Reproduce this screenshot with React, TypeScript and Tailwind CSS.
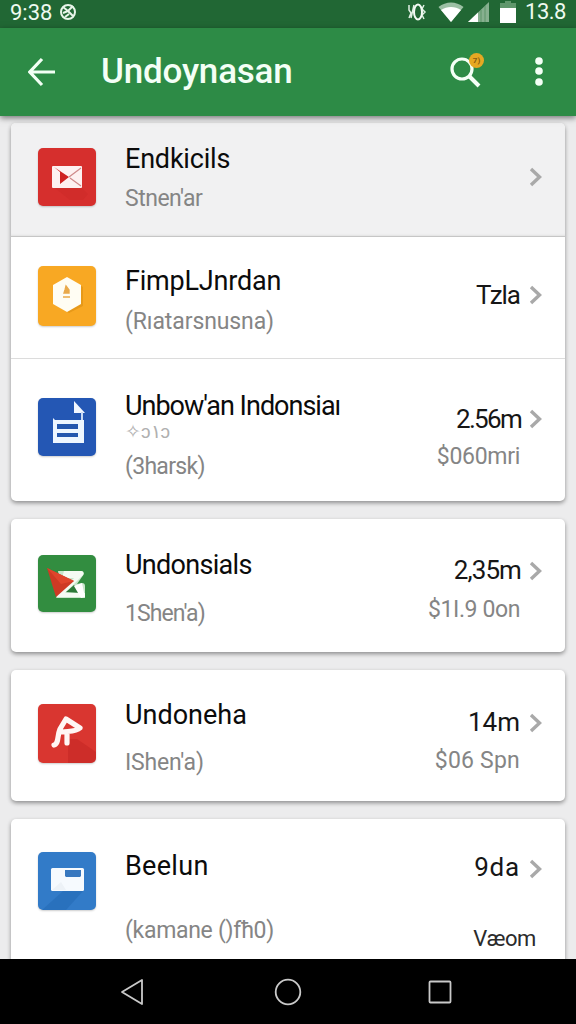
import type { ReactNode } from 'react';

type Line = { text: string; className: string };

type Item = {
    id: string;
    height: string;
    iconClass: string;
    icon: ReactNode;
    lines: Line[];
    values: Line[];
    chevron: string;
};

const title = 'h-8 text-[27px] leading-8 text-[#0b0b0b]';
const sub = 'h-7 text-[23px] leading-7 text-[#858585]';
const value = 'h-8 text-[26px] leading-8 text-[#161616]';

const MailIcon = () => (
    <svg viewBox="0 0 58 58" className="size-full">
        <path d="M17 40h27l6 6-5 6H32z" fill="#b71c1c" opacity=".15" />
        <rect x="14" y="18" width="30" height="22" rx="1" fill="#fdf1f1" />
        <path d="M16 19l15 10-9 7V24z" fill="#cf2222" />
        <path d="M43 20L31 29M32 30l11 8" stroke="#cf8a8a" strokeWidth="1.2" fill="none" />
    </svg>
);

const HexIcon = () => (
    <svg viewBox="0 0 58 60" className="size-full">
        <path d="M31 13l14 8v19l-14 7-13-8z" fill="#d98c10" opacity=".55" />
        <path d="M29 11l14 8v19l-14 8-14-8V19z" fill="#fffdf3" />
        <path d="M28 20l3 4v3h-5l1-3zM26 25h5M25 31h7" fill="#e9a94b" stroke="#e9a94b" strokeWidth="1.4" />
    </svg>
);

const DocIcon = () => (
    <svg viewBox="0 0 58 58" className="size-full">
        <path d="M36 3l11 12H36z" fill="#f2f7ff" />
        <path d="M43 14h2v9h-2z" fill="#c9daf4" />
        <path d="M15 20l2 2h29v23H15z" fill="#eef6ff" />
        <path d="M19 26h21v5H19zM19 35h21v4H19z" fill="#2457ae" />
    </svg>
);

const ArrowIcon = () => (
    <svg viewBox="0 0 58 57" className="size-full">
        <path d="M20 16h23q3 0 3 3l-7 10 5-1q3 0 3 3v12H18l5-10z" fill="#c9e6cc" />
        <path d="M26 16h17q3 0 2 4L27 38h20v4H18l18-19H24z" fill="#f4fbf3" />
        <path d="M28 37l8-7 7 8z" fill="#2c7a38" />
        <path d="M36 31l8-3 3 14-4 1z" fill="#fff" />
        <path d="M9 13l27 13-18 16z" fill="#cf3a24" />
        <path d="M9 13l27 13-13 3z" fill="#e0452c" />
    </svg>
);

const AcrobatIcon = () => (
    <svg viewBox="0 0 58 59" className="size-full">
        <path d="M30 35h9l19 13v11H30z" fill="#b71c1c" opacity=".35" />
        <path d="M16 41c5-1 3-9 6-16l6-10 14 9c-4 4-11 3-18 4M29 30v9" fill="none" stroke="#fff6f4" strokeWidth="5.2" strokeLinecap="round" strokeLinejoin="round" />
    </svg>
);

const CardIcon = () => (
    <svg viewBox="0 0 58 58" className="size-full">
        <path d="M4 58l21-19h20L28 58z" fill="#1b5ea8" opacity=".35" />
        <rect x="13" y="16" width="33" height="23" rx="1.5" fill="#f6fafe" />
        <path d="M27 18h16v6l-1 1H28l-1-1z" fill="#3878bf" />
        <path d="M14 38l9-8 5 8z" fill="#edf2f7" />
    </svg>
);

const cards: Item[][] = [
    [
        {
            id: 'endkicils',
            height: 'h-[114px] bg-[#f1f1f2] shadow-[inset_0_-1px_0_#c6c6c6,inset_0_-3px_2px_-1px_#e2e2e2]',
            iconClass: 'mt-[25px] h-[58px] bg-[#d62f2d]',
            icon: <MailIcon />,
            lines: [
                { text: 'Endkicils', className: `mt-[20px] tracking-[-0.2px] ${title}` },
                { text: 'Stnen\'ar', className: `mt-[10px] tracking-[-0.5px] ${sub}` },
            ],
            values: [],
            chevron: 'mt-[44px]',
        },
        {
            id: 'fimp',
            height: 'h-[122px] border-b border-[#dcdcdc]',
            iconClass: 'mt-[29px] h-[60px] bg-[#f8a823]',
            icon: <HexIcon />,
            lines: [
                { text: 'FimpLJnrdan', className: `mt-[28px] tracking-[-0.2px] ${title}` },
                { text: '(Rıatarsnusna)', className: `mt-[11px] tracking-[-0.1px] ${sub}` },
            ],
            values: [{ text: 'Tzla', className: `mt-[42px] tracking-[-1px] ${value}` }],
            chevron: 'mt-[48px]',
        },
        {
            id: 'unbowan',
            height: 'h-[142px]',
            iconClass: 'mt-[39px] h-[58px] bg-[#2457b4]',
            icon: <DocIcon />,
            lines: [
                { text: 'Unbow\'an Indonsiaı', className: `mt-[31px] tracking-[-1px] ${title}` },
                { text: '✧ɔ١ɔ', className: 'h-5 text-[19px] leading-5 text-[#b0b0b0]' },
                { text: '(3harsk)', className: `mt-[11px] tracking-[-0.7px] ${sub}` },
            ],
            values: [
                { text: '2.56m', className: `mt-[44px] -mr-px tracking-[-1.7px] ${value}` },
                { text: '$060mri', className: `mt-[8px] tracking-[-0.3px] ${sub}` },
            ],
            chevron: 'mt-[50px]',
        },
    ],
    [
        {
            id: 'undonsials',
            height: 'h-[133px]',
            iconClass: 'mt-[36px] h-[57px] bg-[#328d40]',
            icon: <ArrowIcon />,
            lines: [
                { text: 'Undonsials', className: `mt-[30px] tracking-[-0.7px] ${title}` },
                { text: '1Shen\'a)', className: `mt-[19px] tracking-[-0.9px] ${sub}` },
            ],
            values: [
                { text: '2,35m', className: `mt-[35px] -mr-px tracking-[-0.9px] ${value}` },
                { text: '$1I.9 0on', className: `mt-[10px] tracking-[-0.4px] ${sub}` },
            ],
            chevron: 'mt-[42px]',
        },
    ],
    [
        {
            id: 'undoneha',
            height: 'h-[131px]',
            iconClass: 'mt-[34px] h-[59px] bg-[#d93630]',
            icon: <AcrobatIcon />,
            lines: [
                { text: 'Undoneha', className: `mt-[29px] ${title}` },
                { text: 'IShen\'a)', className: `mt-[18px] tracking-[-0.2px] ${sub}` },
            ],
            values: [
                { text: '14m', className: `mt-[36px] ${value}` },
                { text: '$06 Spn', className: `mt-[9px] tracking-[0.2px] ${sub}` },
            ],
            chevron: 'mt-[43px]',
        },
    ],
    [
        {
            id: 'beelun',
            height: 'mt-px h-[160px]',
            iconClass: 'mt-[32px] h-[58px] bg-[#327bc8]',
            icon: <CardIcon />,
            lines: [
                { text: 'Beelun', className: `mt-[30px] tracking-[0.3px] ${title}` },
                { text: '(kamane ()fħ0)', className: `mt-[35px] tracking-[-0.3px] ${sub}` },
            ],
            values: [
                { text: '9da', className: `mt-[31px] tracking-[0.8px] ${value}` },
                { text: 'Væom', className: 'mt-[42px] -mr-4 h-7 text-[22px] leading-7 tracking-[-0.4px] text-[#2b2b2b]' },
            ],
            chevron: 'mt-[39px]',
        },
    ],
];

function Row({ item }: { item: Item }) {
    return (
        <div className={`flex items-start pr-[22px] pl-[27px] ${item.height}`}>
            <div className={`w-[58px] shrink-0 overflow-hidden rounded-[5px] shadow-[0_1px_2px_rgba(0,0,0,0.2)] ${item.iconClass}`}>
                {item.icon}
            </div>
            <div className="ml-[29px] flex flex-1 flex-col items-start whitespace-nowrap">
                {item.lines.map((line) => (
                    <div key={line.text} className={line.className}>{line.text}</div>
                ))}
            </div>
            <div className="mr-[9px] flex flex-col items-end whitespace-nowrap">
                {item.values.map((line) => (
                    <div key={line.text} className={line.className}>{line.text}</div>
                ))}
            </div>
            <svg viewBox="0 0 14 20" className={`h-5 w-3.5 shrink-0 ${item.chevron}`}>
                <path d="M2 2l8.500 8-8.500 8" fill="none" stroke="#a9a9a9" strokeWidth="3.400" />
            </svg>
        </div>
    );
}

function StatusBar() {
    return (
        <div className="flex h-7 shrink-0 items-center bg-[#216734] pr-[10px] pl-[10px] text-[22px] leading-7 text-[#eefaf0]">
            <span className="relative -top-px w-[43px]">9:38</span>
            <svg viewBox="0 0 16 18" className="-mt-1 ml-[7px] h-[18px] w-4">
                <circle cx="8" cy="9" r="7" fill="none" stroke="#e8f5ea" strokeWidth="2" />
                <path d="M3 4l5 4 5-5M3 10l5-2 5 5M5 14l4-3" fill="none" stroke="#e8f5ea" strokeWidth="2" />
            </svg>
            <div className="-mt-1 ml-auto flex items-center">
                <svg viewBox="0 0 20 20" className="h-5 w-5">
                    <path d="M2 3v5l2 3-2 5M7 3L4 16M17 3l-2 4 3 3-3 3 2 4" fill="none" stroke="#dff0e2" strokeWidth="1.500" />
                    <ellipse cx="11" cy="10" rx="4" ry="7.500" fill="none" stroke="#f3fbf4" strokeWidth="2" />
                </svg>
                <svg viewBox="0 0 26 20" className="ml-[11px] h-5 w-[26px]">
                    <path d="M0.500 5C8-1 18-1 25.500 5L13 20z" fill="#9cc0a4" />
                    <path d="M3 8c6-4 14-4 20 0L13 20z" fill="#fff" />
                </svg>
                <svg viewBox="0 0 22 20" className="ml-[4px] h-5 w-[22px]">
                    <path d="M21 0v20H0z" fill="#87b08f" />
                    <path d="M10 10.500V20H0z" fill="#fff" />
                    <path d="M13 8v12M17 4v16" stroke="#5c9468" strokeWidth="1" />
                </svg>
                <svg viewBox="0 0 16 22" className="ml-[10px] h-[22px] w-4">
                    <path d="M5 0h6v2h5v6H0V2h5z" fill="#5f976b" />
                    <path d="M0 7h16v15H0z" fill="#fff" />
                </svg>
                <span className="ml-[9px] tracking-[-0.5px]">13.8</span>
            </div>
        </div>
    );
}

function AppBar() {
    return (
        <header className="z-10 flex h-[88px] shrink-0 items-center bg-[#2d8b46] pr-[33px] pl-7 text-white shadow-[0_2px_6px_rgba(0,0,0,0.5)]">
            <svg viewBox="0 0 28 30" className="h-[30px] w-7">
                <path d="M27 15H2M14 2L1.800 15 14 28" fill="none" stroke="#f2fff4" strokeWidth="3.200" />
            </svg>
            <h1 className="ml-[45px] text-[35px] leading-10 font-medium tracking-[-0.2px] text-[#f4fff6]">Undoynasan</h1>
            <div className="relative ml-auto h-9 w-9">
                <svg viewBox="0 0 36 36" className="size-9">
                    <circle cx="13" cy="15" r="10" fill="none" stroke="#f4fff6" strokeWidth="3.200" />
                    <path d="M20 22l10 10" stroke="#f4fff6" strokeWidth="4" />
                </svg>
                <span className="absolute -top-[1px] left-[20px] flex h-[15px] w-[15px] items-center justify-center rounded-full bg-[#e6a823] text-[8px] font-bold text-[#875b10]">7)</span>
            </div>
            <svg viewBox="0 0 8 30" className="ml-[50px] h-[30px] w-2">
                <circle cx="4" cy="4" r="3.800" fill="#f4fff6" />
                <circle cx="4" cy="14" r="3.800" fill="#f4fff6" />
                <circle cx="4" cy="25" r="3.800" fill="#f4fff6" />
            </svg>
        </header>
    );
}

function NavBar() {
    return (
        <nav className="flex h-[65px] shrink-0 items-center bg-black pl-[120px]">
            <svg viewBox="0 0 24 28" className="h-7 w-6">
                <path d="M22 2v24L2 14z" fill="none" stroke="#c9c9c9" strokeWidth="1.800" strokeLinejoin="round" />
            </svg>
            <svg viewBox="0 0 28 28" className="ml-[130px] h-7 w-7">
                <circle cx="14" cy="14" r="12.300" fill="none" stroke="#c9c9c9" strokeWidth="1.800" />
            </svg>
            <svg viewBox="0 0 24 24" className="ml-[126px] h-6 w-6">
                <rect x="1.500" y="1.500" width="21" height="21" rx="1" fill="none" stroke="#c9c9c9" strokeWidth="1.800" />
            </svg>
        </nav>
    );
}

export default function App() {
    return (
        <div className="flex h-[1024px] w-[576px] flex-col overflow-hidden bg-[#ececed] font-['Roboto',sans-serif]">
            <StatusBar />
            <AppBar />
            <main className="flex min-h-0 flex-1 flex-col gap-[18px] overflow-hidden pt-[7px] pr-[11px] pl-[11px]">
                {cards.map((items) => (
                    <section key={items[0].id} className="shrink-0 overflow-hidden rounded-[5px] bg-white shadow-[0_2px_4px_rgba(0,0,0,0.4)]">
                        {items.map((item) => <Row key={item.id} item={item} />)}
                    </section>
                ))}
            </main>
            <NavBar />
        </div>
    );
}
